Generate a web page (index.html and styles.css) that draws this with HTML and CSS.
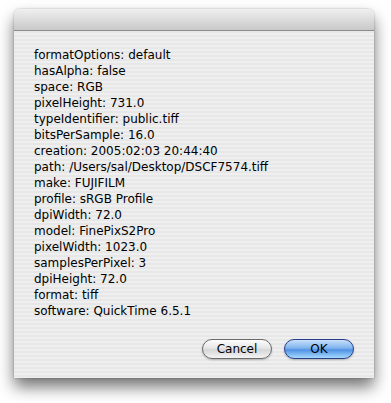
FILE: index.html
```html
<!DOCTYPE html>
<html lang="en">
<head>
  <meta charset="UTF-8">
  <meta name="viewport" content="width=device-width, initial-scale=1.0">
  <title>Image Properties</title>
  <link rel="stylesheet" href="styles.css">
</head>
<body>

  <div class="window">
    <div class="titlebar"></div>
    <div class="content">
      <ul class="props">
        <li>formatOptions: default</li>
        <li>hasAlpha: false</li>
        <li>space: RGB</li>
        <li>pixelHeight: 731.0</li>
        <li>typeIdentifier: public.tiff</li>
        <li>bitsPerSample: 16.0</li>
        <li>creation: 2005:02:03 20:44:40</li>
        <li>path: /Users/sal/Desktop/DSCF7574.tiff</li>
        <li>make: FUJIFILM</li>
        <li>profile: sRGB Profile</li>
        <li>dpiWidth: 72.0</li>
        <li>model: FinePixS2Pro</li>
        <li>pixelWidth: 1023.0</li>
        <li>samplesPerPixel: 3</li>
        <li>dpiHeight: 72.0</li>
        <li>format: tiff</li>
        <li>software: QuickTime 6.5.1</li>
      </ul>
      <div class="buttons">
        <button class="btn">Cancel</button>
        <button class="btn default">OK</button>
      </div>
    </div>
  </div>

</body>
</html>
```

FILE: styles.css
```css
body {
  margin: 0;
  width: 391px;
  height: 403px;
  background-color: #fff;
  font-family: "DejaVu Sans", Verdana, sans-serif;
  overflow: hidden;
}
.window {
  margin: 9px 0 0 14px;
  width: 360px;
  height: 369px;
  border-radius: 6px 6px 0 0;
  background: repeating-linear-gradient(to bottom, #efefef 0, #efefef 2px, #e7e7e7 2px, #e7e7e7 4px);
  box-shadow: 0 9px 16px rgba(0, 0, 0, 0.55), 0 0 2px rgba(0, 0, 0, 0.3);
  display: flex;
  flex-direction: column;
}
.titlebar {
  height: 21px;
  border-radius: 6px 6px 0 0;
  background: linear-gradient(to bottom, #f0f0f0, #d8d8d8 60%, #c9c9c9);
  border-bottom: 1px solid #8c8c8c;
}
.content {
  flex: 1;
  display: flex;
  flex-direction: column;
  padding: 16px 20px 19px 20px;
}
.props {
  list-style: none;
  margin: 0;
  padding: 0;
  font-size: 12px;
  line-height: 16px;
  color: #000;
  flex: 1;
}
.buttons {
  display: flex;
  justify-content: flex-end;
  gap: 12px;
  padding-right: 0;
}
.btn {
  width: 70px;
  height: 20px;
  border-radius: 10px;
  border: 1px solid #6a6a6a;
  font-family: "DejaVu Sans", Verdana, sans-serif;
  font-size: 12px;
  color: #000;
  padding: 0;
  background: linear-gradient(to bottom, #fdfdfd 0%, #e6e6e6 45%, #d6d6d6 55%, #f4f4f4 100%);
  box-shadow: 0 1px 2px rgba(0, 0, 0, 0.25);
}
.btn.default {
  border-color: #2a3f8a;
  background: linear-gradient(to bottom, #c8e0fb 0%, #7fb4ee 45%, #4f92e4 55%, #a8daff 100%);
}
```
